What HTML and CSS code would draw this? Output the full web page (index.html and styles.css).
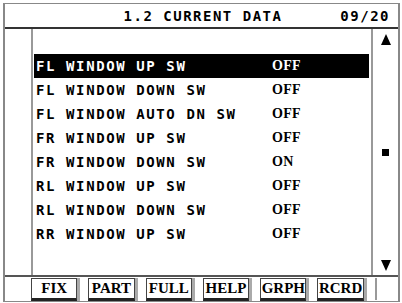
FILE: index.html
```html
<!DOCTYPE html>
<html lang="en">
<head>
  <meta charset="UTF-8" />
  <title>1.2 Current Data</title>
  <link rel="stylesheet" href="styles.css">
</head>
<body>

<div class="screen">

  <div class="title-bar">
    <span></span>
    <span class="title">1.2 CURRENT DATA</span>
    <span class="page">09/20</span>
  </div>

  <div class="main">
    <div class="side"></div>

    <div class="list">
      <div class="row selected"><span class="label">FL WINDOW UP SW</span><span class="value">OFF</span></div>
      <div class="row"><span class="label">FL WINDOW DOWN SW</span><span class="value">OFF</span></div>
      <div class="row"><span class="label">FL WINDOW AUTO DN SW</span><span class="value">OFF</span></div>
      <div class="row"><span class="label">FR WINDOW UP SW</span><span class="value">OFF</span></div>
      <div class="row"><span class="label">FR WINDOW DOWN SW</span><span class="value">ON</span></div>
      <div class="row"><span class="label">RL WINDOW UP SW</span><span class="value">OFF</span></div>
      <div class="row"><span class="label">RL WINDOW DOWN SW</span><span class="value">OFF</span></div>
      <div class="row"><span class="label">RR WINDOW UP SW</span><span class="value">OFF</span></div>
    </div>

    <div class="scroll">
      <svg width="10" height="11" viewBox="0 0 10 11"><path d="M5 0 L10 11 L0 11 Z" fill="#000"/></svg>
      <div class="thumb"></div>
      <svg width="10" height="11" viewBox="0 0 10 11"><path d="M0 0 L10 0 L5 11 Z" fill="#000"/></svg>
    </div>
  </div>

  <div class="keys">
    <div class="key">FIX</div>
    <div class="key">PART</div>
    <div class="key">FULL</div>
    <div class="key">HELP</div>
    <div class="key">GRPH</div>
    <div class="key">RCRD</div>
    <div class="blank"></div>
  </div>

</div>

</body>
</html>
```

FILE: styles.css
```css
body {
  margin: 0;
  background: #fff;
  font-family: "DejaVu Sans Mono", monospace;
}
.screen {
  margin: 3px 0 0 3px;
  width: 393px;
  border: 1px solid #888;
  border-left-width: 2px;
  border-right-width: 2px;
}
.title-bar {
  display: grid;
  grid-template-columns: 1fr auto 1fr;
  align-items: center;
  height: 22px;
  border-bottom: 2px solid #333;
  font-size: 14px;
  font-weight: bold;
  letter-spacing: 1.5px;
  padding-top: 1px;
}
.title {
  padding-left: 3px;
}
.page {
  justify-self: end;
  padding-right: 8px;
}
.main {
  display: flex;
  height: 246px;
  border-bottom: 2px solid #555;
}
.side {
  width: 26px;
  border-right: 2px solid #999;
}
.list {
  flex: 1;
  padding: 25px 2px 0 1px;
}
.row {
  display: grid;
  grid-template-columns: 236px auto;
  align-items: center;
  height: 24px;
  padding-left: 2px;
}
.row.selected {
  background: #000;
  color: #fff;
}
.label {
  font-size: 14px;
  font-weight: bold;
  letter-spacing: 1.6px;
  white-space: nowrap;
}
.value {
  font-family: "Liberation Serif", serif;
  font-size: 14px;
  font-weight: bold;
  letter-spacing: 0.3px;
}
.scroll {
  width: 25px;
  border-left: 2px solid #999;
  display: flex;
  flex-direction: column;
  justify-content: space-between;
  align-items: center;
  padding: 5px 0 4px;
}
.thumb {
  width: 7px;
  height: 7px;
  background: #000;
}
.keys {
  display: flex;
  align-items: center;
  gap: 11px;
  height: 24px;
  padding-left: 26px;
}
.key {
  width: 46px;
  height: 19px;
  border: 1px solid #444;
  border-bottom: 3px solid #222;
  box-shadow: 3px 0 0 #aaa;
  font-family: "Liberation Serif", serif;
  font-size: 15px;
  font-weight: bold;
  line-height: 19px;
  text-align: center;
}
.blank {
  margin-left: auto;
  width: 22px;
  height: 22px;
  border-left: 2px solid #999;
}
```
